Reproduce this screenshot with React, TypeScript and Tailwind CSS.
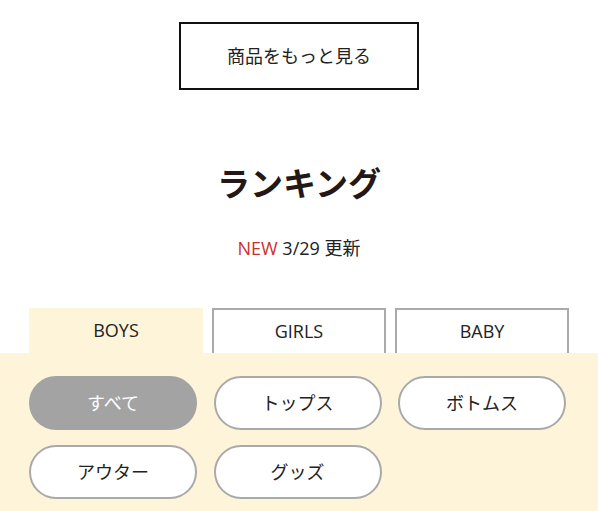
import React from "react";

export default function App() {
  const font = { fontFamily: '"Open Sans", "Noto Sans CJK JP", sans-serif' };
  const tabs = ["BOYS", "GIRLS", "BABY"];
  const pills = ["すべて", "トップス", "ボトムス", "アウター", "グッズ"];
  return (
    <div className="w-[598px] h-[511px] overflow-hidden bg-white text-[#222]" style={font}>
      <div className="flex justify-center pt-[22px]">
        <div className="w-[240px] h-[68px] border-2 border-[#111] flex items-center justify-center text-[18px]">
          商品をもっと見る
        </div>
      </div>
      <h2 className="mt-[74px] text-center text-[33px] font-bold leading-[40px] text-[#231815]">ランキング</h2>
      <p className="mt-[31px] text-center text-[18px] leading-[26px]">
        <span className="text-[#c9302c]">NEW</span> 3/29 更新
      </p>
      <div className="mt-[47px] flex justify-center gap-[9px]">
        {tabs.map((t, i) => (
          <div
            key={t}
            className={
              i === 0
                ? "w-[174px] h-[45px] bg-[#fef4d9] flex items-center justify-center text-[18px]"
                : "w-[174px] h-[45px] bg-white border-2 border-b-0 border-[#aaaaaa] flex items-center justify-center text-[18px]"
            }
          >
            {t}
          </div>
        ))}
      </div>
      <div className="bg-[#fef4d9] h-[200px] pt-[23px]">
        <div className="ml-[29px] grid grid-cols-[repeat(3,168px)] gap-x-[16.5px] gap-y-[15px]">
          {pills.map((p, i) => (
            <div
              key={p}
              className={
                i === 0
                  ? "h-[54px] rounded-full bg-[#a3a3a3] border-2 border-[#a3a3a3] text-white flex items-center justify-center text-[18px]"
                  : "h-[54px] rounded-full bg-white border-2 border-[#a9a9a9] flex items-center justify-center text-[18px]"
              }
            >
              {p}
            </div>
          ))}
        </div>
      </div>
    </div>
  );
}
